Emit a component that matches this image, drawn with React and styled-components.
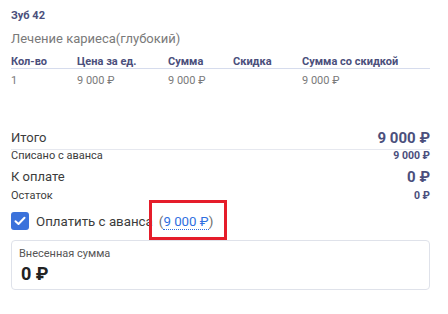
import React from "react";
import styled, { createGlobalStyle } from "styled-components";

const Global = createGlobalStyle`
  html, body { margin: 0; padding: 0; background: #fff; }
  body { font-family: Roboto, "Noto Sans", Arial, sans-serif; }
  *, *::before, *::after { box-sizing: border-box; }
`;

const Page = styled.div`
  width: 430px;
  padding: 8px 0 0 11px;
  display: flex;
  flex-direction: column;
`;

const Tooth = styled.div`
  font-size: 11px;
  line-height: 16px;
  font-weight: 700;
  color: #4b4f7c;
`;

const Service = styled.div`
  margin-top: 6px;
  font-size: 13px;
  line-height: 18px;
  color: #7a7a7a;
`;

const Grid = styled.div`
  display: grid;
  grid-template-columns: 66px 91px 65px 69px 1fr;
  font-size: 11px;
  ${(p) =>
    p.$head
      ? `margin-top: 7px; line-height: 13px; font-weight: 700; color: #4b4f7c; border-bottom: 1px solid #d6dced;`
      : `margin-top: 5px; line-height: 14px; color: #7a7a7a;`}
`;

const Totals = styled.div`
  margin-top: 41px;
  display: flex;
  flex-direction: column;
`;

const Line = styled.div`
  display: flex;
  justify-content: space-between;
  align-items: center;
  margin-top: ${(p) => p.$mt || 0}px;
  line-height: ${(p) => (p.$big ? 18 : 12)}px;
  ${(p) => (p.$divider ? `padding-bottom: 2px; border-bottom: 1px solid #e6e8ef;` : ``)}
`;

const Label = styled.span`
  font-size: ${(p) => (p.$big ? 13 : 11)}px;
  color: #3c3c3c;
`;

const Amount = styled.span`
  font-size: ${(p) => (p.$big ? 15 : 10.5)}px;
  font-weight: 700;
  color: #4b4f7c;
`;

const CheckRow = styled.label`
  margin-top: 10px;
  display: flex;
  align-items: center;
  height: 18px;
  font-size: 13.3px;
  color: #3c3c3c;
`;

const Box = styled.span`
  width: 18px;
  height: 18px;
  border-radius: 3px;
  background: #3b72db;
  display: flex;
  align-items: center;
  justify-content: center;
  margin-right: 7px;
`;

const Paren = styled.span`
  position: relative;
  margin-left: 6px;
  color: #6b6b6b;
  &::after {
    content: "";
    position: absolute;
    left: -10px;
    right: -14px;
    top: -14px;
    bottom: -11px;
    border: 3px solid #e51d2a;
  }
`;

const Link = styled.span`
  color: #2f6fe0;
  border-bottom: 1px dotted #2f6fe0;
`;

const Field = styled.div`
  margin-top: 10px;
  height: 50px;
  border: 1px solid #dfe2ea;
  border-radius: 4px;
  padding: 5px 7px 0;
  display: flex;
  flex-direction: column;
`;

const FieldLabel = styled.div`
  font-size: 11px;
  line-height: 15px;
  color: #555;
`;

const FieldValue = styled.div`
  margin-top: 2px;
  padding-left: 2px;
  font-size: 18px;
  line-height: 22px;
  font-weight: 700;
  color: #222;
`;

export default function App() {
  return (
    <>
      <Global />
      <Page>
        <Tooth>Зуб 42</Tooth>
        <Service>Лечение кариеса(глубокий)</Service>
        <Grid $head>
          <span>Кол-во</span>
          <span>Цена за ед.</span>
          <span>Сумма</span>
          <span>Скидка</span>
          <span>Сумма со скидкой</span>
        </Grid>
        <Grid>
          <span>1</span>
          <span>9 000 ₽</span>
          <span>9 000 ₽</span>
          <span></span>
          <span>9 000 ₽</span>
        </Grid>
        <Totals>
          <Line $big $divider>
            <Label $big>Итого</Label>
            <Amount $big>9 000 ₽</Amount>
          </Line>
          <Line>
            <Label>Списано с аванса</Label>
            <Amount>9 000 ₽</Amount>
          </Line>
          <Line $big $mt={6}>
            <Label $big>К оплате</Label>
            <Amount $big>0 ₽</Amount>
          </Line>
          <Line $mt={4}>
            <Label>Остаток</Label>
            <Amount>0 ₽</Amount>
          </Line>
        </Totals>
        <CheckRow>
          <Box>
            <svg width="12" height="10" viewBox="0 0 12 10">
              <path d="M1.5 5.2 L4.5 8 L10.5 1.8" fill="none" stroke="#fff" strokeWidth="2" strokeLinecap="round" strokeLinejoin="round" />
            </svg>
          </Box>
          Оплатить с аванса
          <Paren>
            (<Link>9 000 ₽</Link>)
          </Paren>
        </CheckRow>
        <Field>
          <FieldLabel>Внесенная сумма</FieldLabel>
          <FieldValue>0 ₽</FieldValue>
        </Field>
      </Page>
    </>
  );
}
